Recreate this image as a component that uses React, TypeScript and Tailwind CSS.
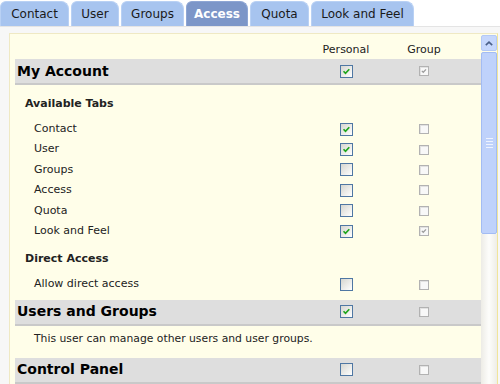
import React from 'react';

const tabs = [
  { label: 'Contact', w: 'w-[69px]' },
  { label: 'User', w: 'w-[48px]' },
  { label: 'Groups', w: 'w-[63px]' },
  { label: 'Access', w: 'w-[62px]', active: true },
  { label: 'Quota', w: 'w-[59px]' },
  { label: 'Look and Feel', w: 'w-[103px]' },
];

const Check = ({ color }: { color: string }) => (
  <svg viewBox="0 0 13 13" className="absolute inset-0 w-full h-full">
    <polyline points="3,6.2 5.3,8.6 9.8,3.8" fill="none" stroke={color} strokeWidth="2" />
  </svg>
);

// personal column: XP style enabled checkbox
const Box = ({ checked }: { checked?: boolean }) => (
  <span className="relative inline-block w-[13px] h-[13px] border border-[#4f77a3] bg-linear-to-br from-[#d6d6d0] to-white">
    {checked && <Check color="#1fa51c" />}
  </span>
);

// group column: disabled, smaller and gray
const SmallBox = ({ checked }: { checked?: boolean }) => (
  <span className="relative inline-block w-[10px] h-[10px] border border-[#b2b2b2] bg-[#f8f8f8] shadow-[inset_1px_1px_0_#e2e2e2]">
    {checked && <Check color="#9c9c9c" />}
  </span>
);

const Cols = ({ p, g }: { p?: boolean; g?: boolean }) => (
  <>
    <div className="w-[78px] flex justify-center items-center">
      <Box checked={p} />
    </div>
    <div className="w-[78px] flex justify-center items-center">
      <SmallBox checked={g} />
    </div>
    <div className="w-[18px]" />
  </>
);

const Band = ({ title, p, g }: { title: string; p?: boolean; g?: boolean }) => (
  <div className="flex items-center h-[26px] bg-[#dedede] border-b-2 border-[#c9c9c9]">
    <div className="flex-1 pl-[2px] text-[14px] font-bold text-black">{title}</div>
    <Cols p={p} g={g} />
  </div>
);

const Item = ({ label, p, g }: { label: string; p?: boolean; g?: boolean }) => (
  <div className="flex items-center h-[20.4px]">
    <div className="flex-1 pl-[19px]">{label}</div>
    <Cols p={p} g={g} />
  </div>
);

const SubHead = ({ title }: { title: string }) => (
  <div className="flex items-center h-[20px] pl-[10px] font-bold">{title}</div>
);

export default function App() {
  return (
    <div className="w-[500px] h-[384px] overflow-hidden bg-[#f7f7f7] text-[11px] text-[#222] font-['DejaVu_Sans',sans-serif]">
      {/* tabs */}
      <div className="flex items-end gap-[2px] h-[27px] bg-white border-b border-[#e4e4e4]">
        {tabs.map((t) => (
          <div
            key={t.label}
            className={`${t.w} h-[25px] flex items-center justify-center rounded-t-[6px] rounded-tr-[8px] text-[12px] border border-b-0 ${
              t.active
                ? 'bg-[#7c96c8] border-[#8ea6d4] text-white font-bold'
                : 'bg-[#a7c4ef] border-[#b9d1f4] text-[#1a1a1a]'
            }`}
          >
            {t.label}
          </div>
        ))}
      </div>

      {/* panel */}
      <div className="pt-[6px] pl-[9px] pr-[2px]">
        <div className="flex h-[360px] border border-[#efe9c4] border-r-[#f1e59a] bg-[#fffee9]">
          <div className="flex-1 pl-[5px] overflow-hidden">
            <div className="flex h-[25px] pt-[9px] leading-[14px]">
              <div className="flex-1" />
              <div className="w-[78px] text-center">Personal</div>
              <div className="w-[78px] text-center">Group</div>
              <div className="w-[18px]" />
            </div>

            <Band title="My Account" p g />
            <div className="pt-[9px] pb-[5px]">
              <SubHead title="Available Tabs" />
              <div className="mt-[5px]">
                <Item label="Contact" p />
                <Item label="User" p />
                <Item label="Groups" />
                <Item label="Access" />
                <Item label="Quota" />
                <Item label="Look and Feel" p g />
              </div>
              <div className="mt-[8px]">
                <SubHead title="Direct Access" />
              </div>
              <div className="mt-[5px]">
                <Item label="Allow direct access" />
              </div>
            </div>

            <Band title="Users and Groups" p />
            <div className="h-[32px] pt-[6px] pl-[19px] leading-[14px] text-[10.8px]">
              This user can manage other users and user groups.
            </div>
            <Band title="Control Panel" />
          </div>

          {/* scrollbar */}
          <div className="w-[16px] flex flex-col">
            <div className="h-[16px] mt-[1px] rounded-[2px] bg-[#c6d7fc] border border-[#b4c9f6] flex items-center justify-center">
              <svg viewBox="0 0 8 5" className="w-[8px] h-[5px]">
                <polyline points="0.8,4.2 4,1.2 7.2,4.2" fill="none" stroke="#4a5f88" strokeWidth="1.6" />
              </svg>
            </div>
            <div className="h-[182px] mt-[1px] rounded-[2px] bg-[#bfd2fb] border border-[#a3bcf3] flex flex-col items-center justify-center gap-[2px]">
              <div className="w-[7px] h-px bg-[#eef3ff]" />
              <div className="w-[7px] h-px bg-[#eef3ff]" />
              <div className="w-[7px] h-px bg-[#eef3ff]" />
              <div className="w-[7px] h-px bg-[#eef3ff]" />
            </div>
            <div className="flex-1 bg-linear-to-r from-[#edece6] via-[#fdfdfb] to-[#eeede7]" />
          </div>
        </div>
      </div>
    </div>
  );
}
